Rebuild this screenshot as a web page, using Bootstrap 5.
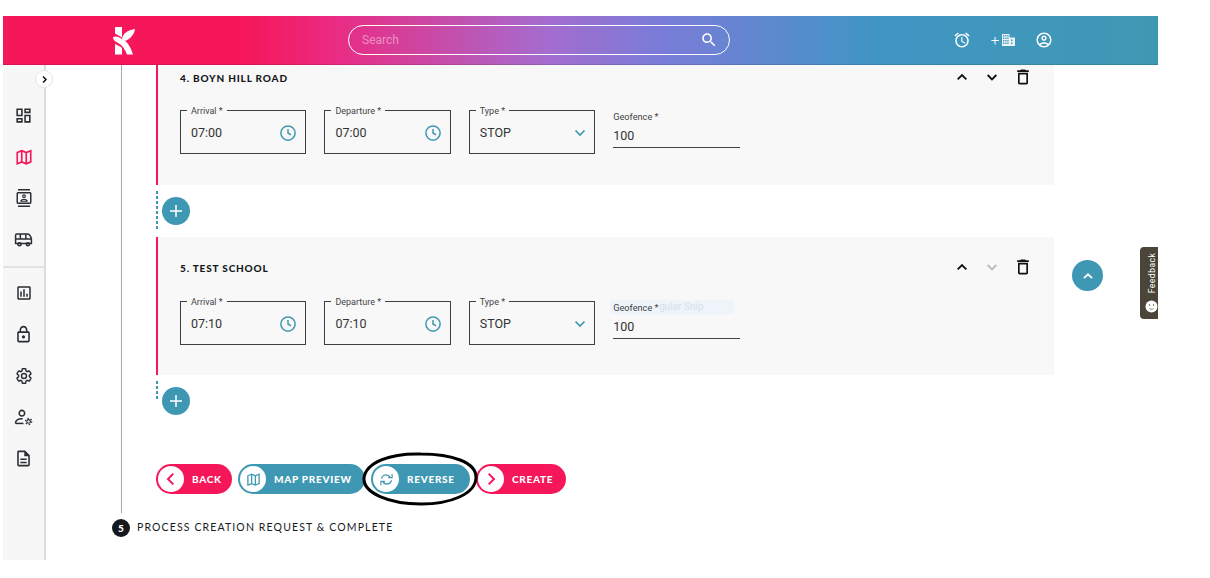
<!DOCTYPE html>
<html lang="en">
<head>
    <meta charset="UTF-8">
    <meta name="viewport" content="width=device-width, initial-scale=1.0">
    <title>Create Route</title>
    <link href="https://cdn.jsdelivr.net/npm/bootstrap@5.3.0/dist/css/bootstrap.min.css" rel="stylesheet">
    <style>
        html, body { height: 100%; overflow: hidden; }
        body { background: #fff; font-family: Roboto, "Liberation Sans", sans-serif; color: #222; }
        .app-shell { position: relative; width: 1155px; margin: 16px 0 0 3px; }
        .top-bar { height: 49px; background: linear-gradient(90deg, #f5175a 0%, #f5175a 21%, #e92c84 29%, #a56cce 47%, #7a7cd8 57%, #3f96c4 76%, #3f98b3 100%); border-bottom: 1px solid rgba(0,0,0,.12); }
        .logo-slot { width: 345px; padding-left: 110px; }
        .search-pill { width: 382px; height: 30px; border: 1.5px solid #fff; border-radius: 15px; padding: 0 11px 0 13px; }
        .search-pill span { font-size: 12px; color: rgba(255,255,255,.45); }
        .top-actions { margin-left: 223px; width: 100px; height: 100%; }
        .top-actions svg { fill: #fff; }
        .plus-mark { color: #fff; font-size: 15px; font-weight: 300; line-height: 1; margin-right: 3px; }
        .main-area { height: 495px; overflow: hidden; }
        .side-rail { width: 43px; background: #f7f7f7; border-right: 2px solid #ddd; padding-top: 30px; flex-shrink: 0; }
        .rail-item { height: 41.33px; }
        .rail-item svg { fill: #2b2f33; }
        .rail-item .line-icon { fill: none; stroke: #2b2f33; stroke-width: 1.9; }
        .rail-item .pink-icon { fill: none; stroke: #f5175a; stroke-width: 2.2; }
        .rail-sep { border-top: 2px solid #e3e3e3; margin: 5.5px 0 5px; }
        .rail-toggle { position: absolute; left: 32px; top: 54px; width: 18px; height: 18px; background: #fff; border: 1px solid #e6e6e6; border-radius: 50%; }
        .content-col { padding-left: 75px; width: 1000px; }
        .step-line { border-left: 1px solid #a8a8a8; height: 448px; padding-left: 34px; }
        .stop-box { width: 898px; background: #f8f8f8; border-left: 2px solid #f5175a; padding: 0 0 30px 22px; position: relative; }
        .stop-first { height: 120px; padding-top: 5px; }
        .stop-second { height: 138px; padding-top: 23px; }
        .stop-title { font-family: Lato, "Liberation Sans", sans-serif; font-weight: 900; font-size: 10px; letter-spacing: .83px; color: #15191d; line-height: 16px; height: 16px; }
        .stop-tools { position: absolute; right: 21px; width: 79px; }
        .stop-first .stop-tools { top: 2px; }
        .stop-second .stop-tools { top: 20px; }
        .fields-row { gap: 18px; }
        .stop-first .fields-row { margin-top: 24px; }
        .stop-second .fields-row { margin-top: 25px; }
        .out-field { position: relative; width: 126.4px; height: 44px; border: 1px solid #3c4043; padding: 2px 8px 0 10px; font-size: 12.5px; color: #333; }
        .out-field label { position: absolute; top: -6px; left: 6px; padding: 0 4px; background: #f8f8f8; font-size: 9px; line-height: 12px; color: #444; margin: 0; }
        .line-field { position: relative; width: 127px; height: 38px; border-bottom: 1px solid #444; }
        .line-field label { position: absolute; top: 1px; left: 0; font-size: 9.2px; line-height: 12px; color: #444; margin: 0; }
        .line-field span { position: absolute; top: 18px; left: 0; font-size: 12.5px; line-height: 15px; color: #333; }
        .ghost-tip { position: absolute; left: -3px; top: -1px; width: 124px; height: 14px; background: #eef4f9; color: #d6e2ea; font-size: 10px; line-height: 14px; padding-left: 49px; }
        .add-row { height: 52px; width: 898px; }
        .add-dash { width: 2px; height: 40px; margin-top: 6px; align-self: flex-start; background: repeating-linear-gradient(180deg, #3f98b3 0 3px, transparent 3px 5px); }
        .add-short .add-dash { height: 20px; }
        .add-btn { width: 28px; height: 28px; background: #3f98b3; border: 0; border-radius: 50%; padding: 0; margin-left: 4px; flex-shrink: 0; }
        .action-row { margin-top: 37px; gap: 6px; }
        .pill-btn { height: 30px; border: 0; border-radius: 15px; padding: 2px 0 2px 2px; color: #fff; font-family: Lato, "Liberation Sans", sans-serif; font-weight: 900; font-size: 10px; letter-spacing: .72px; line-height: 1; }
        .pill-btn:hover, .pill-btn:active { color: #fff; }
        .pill-pink { background: #f5175a; }
        .pill-teal { background: #3f98b3; }
        .pill-back { width: 76px; }
        .pill-map { width: 127px; }
        .pill-rev { width: 99px; }
        .pill-new { width: 90px; }
        .pill-face { width: 26px; height: 26px; border-radius: 50%; background: #fff; flex-shrink: 0; }
        .step-five { margin-left: -9px; margin-top: 6px; }
        .step-dot { width: 18px; height: 18px; border-radius: 50%; background: #15191d; color: #fff; font-family: Lato, "Liberation Sans", sans-serif; font-weight: 900; font-size: 10px; }
        .step-name { font-family: Lato, "Liberation Sans", sans-serif; font-size: 10.5px; letter-spacing: 1.13px; color: #15191d; margin-left: 7px; }
        .scroll-up { position: absolute; left: 1069px; top: 244px; width: 31px; height: 31px; background: #3f98b3; border: 0; border-radius: 50%; padding: 0; }
        .feedback-tab { position: absolute; left: 1137px; top: 231px; width: 18px; height: 72px; background: #4a4538; border-radius: 4px 0 0 4px; overflow: hidden; }
        .feedback-tab span { position: absolute; left: 12px; top: 26px; transform: translate(-50%, -50%) rotate(-90deg); color: #fff; font-size: 8.5px; letter-spacing: .5px; white-space: nowrap; }
        .feedback-tab svg { position: absolute; left: 5px; top: 53px; }
        .ink-ring { position: absolute; left: 358px; top: 434px; pointer-events: none; }
    </style>
</head>
<body>
    <div class="app-shell">
        <!-- top bar -->
        <header class="top-bar d-flex align-items-center">
            <div class="logo-slot">
                <svg width="23" height="29" viewBox="0 0 23 29" fill="#fff">
                    <path d="M2 1h7v10.500L2 7.500z"/>
                    <path d="M0 11c3-1.500 6 0 9 2 3 2 7 3 11 15.500h-6C12 23 9 19 5 17c-3-1.500-5-3-5-6z"/>
                    <path d="M2 18c2 1 5 2 7 4v6.500H2z"/>
                    <path d="M9 13c1-6 6-9 13-10-1 6-5 10-10 12z"/>
                </svg>
            </div>
            <div class="search-pill d-flex align-items-center justify-content-between">
                <span>Search</span>
                <svg width="18" height="18" viewBox="0 0 24 24" fill="#fff"><path d="M15.500 14h-.79l-.28-.27C15.410 12.590 16 11.110 16 9.500 16 5.910 13.090 3 9.500 3S3 5.910 3 9.500 5.910 16 9.500 16c1.610 0 3.090-.59 4.230-1.570l.27.28v.79l5 4.990L20.490 19l-4.990-5zm-6 0C7.010 14 5 11.990 5 9.500S7.010 5 9.500 5 14 7.010 14 9.500 11.990 14 9.500 14z"/></svg>
            </div>
            <div class="top-actions d-flex align-items-center justify-content-between">
                <svg width="18" height="18" viewBox="0 0 24 24"><path d="M22 5.720l-4.600-3.860-1.290 1.530 4.600 3.860L22 5.720zM7.880 3.390L6.600 1.860 2 5.710l1.290 1.530 4.590-3.850zM12.500 8H11v6l4.750 2.850.75-1.230-4-2.370V8zM12 4c-4.970 0-9 4.030-9 9s4.020 9 9 9c4.970 0 9-4.030 9-9s-4.030-9-9-9zm0 16c-3.870 0-7-3.130-7-7s3.130-7 7-7 7 3.130 7 7-3.130 7-7 7z"/></svg>
                <div class="d-flex align-items-center">
                    <span class="plus-mark">+</span>
                    <svg width="13" height="12" viewBox="0 0 13 12" opacity=".9"><path fill-rule="evenodd" d="M0 0h7.500v3.500H13V12H0zM1 1v1.500h1.300V1zM3.200 1v1.500h1.300V1zM5.300 1v1.500h1.300V1zM1 3.500V5h1.300V3.500zM3.200 3.500V5h1.300V3.500zM5.300 3.500V5h1.300V3.500zM1 6v1.500h1.300V6zM3.200 6v1.500h1.300V6zM5.300 6v1.500h1.300V6zM1 8.500V10h1.300V8.500zM3.200 8.500V10h1.300V8.500zM5.300 8.500V10h1.300V8.500zM9 5.500V7h1.500V5.500zM9 8.500V10h1.500V8.500z"/></svg>
                </div>
                <svg width="18" height="18" viewBox="0 0 24 24"><path d="M12 2C6.480 2 2 6.480 2 12s4.480 10 10 10 10-4.480 10-10S17.520 2 12 2zM7.350 18.500C8.660 17.560 10.260 17 12 17s3.340.56 4.650 1.500c-1.310.94-2.910 1.500-4.650 1.500s-3.340-.56-4.650-1.500zm10.790-1.380C16.450 15.800 14.320 15 12 15s-4.450.8-6.140 2.120C4.700 15.730 4 13.950 4 12c0-4.420 3.580-8 8-8s8 3.580 8 8c0 1.950-.7 3.730-1.860 5.120zM12 6c-1.930 0-3.500 1.570-3.500 3.500S10.070 13 12 13s3.500-1.570 3.500-3.500S13.930 6 12 6zm0 5c-.83 0-1.500-.67-1.500-1.500S11.170 8 12 8s1.500.67 1.500 1.500S12.830 11 12 11z"/></svg>
            </div>
        </header>

        <div class="main-area d-flex">
            <!-- side rail -->
            <nav class="side-rail">
                <div class="rail-item d-flex align-items-center justify-content-center">
                    <svg width="19" height="19" viewBox="0 0 24 24"><path d="M19 5v2h-4V5h4M9 5v6H5V5h4m10 8v6h-4v-6h4M9 17v2H5v-2h4M21 3h-8v6h8V3zM11 3H3v10h8V3zm10 8h-8v10h8V11zm-10 4H3v6h8v-6z"/></svg>
                </div>
                <div class="rail-item d-flex align-items-center justify-content-center">
                    <svg width="18" height="18" viewBox="0 0 24 24" class="pink-icon"><path d="M3 6l6-2.500 6 2.500 6-2.500v15L15 21l-6-2.500L3 21zM9 3.500v15M15 6v15"/></svg>
                </div>
                <div class="rail-item d-flex align-items-center justify-content-center">
                    <svg width="18" height="18" viewBox="0 0 24 24"><path d="M20 0H4v2h16V0zM4 24h16v-2H4v2zM20 4H4c-1.100 0-2 .9-2 2v12c0 1.100.9 2 2 2h16c1.100 0 2-.9 2-2V6c0-1.100-.9-2-2-2zm0 14H4V6h16v12zm-8-6c1.380 0 2.500-1.120 2.500-2.500S13.380 7 12 7 9.500 8.120 9.500 9.500 10.620 12 12 12zm0-3.500c.55 0 1 .45 1 1s-.45 1-1 1-1-.45-1-1 .45-1 1-1zM17 15.990c0-2.090-3.310-2.990-5-2.990s-5 .9-5 2.990V17h10v-1.010zM8.810 15.500c.61-.52 2.030-1 3.190-1 1.170 0 2.590.48 3.200 1H8.810z"/></svg>
                </div>
                <div class="rail-item d-flex align-items-center justify-content-center">
                    <svg width="19" height="19" viewBox="0 0 24 24" class="line-icon"><path d="M2 7c0-1 .6-2 1.500-2h14c2 0 4.500 4 4.500 7v5H2zM2 11.500h19.500M8 5v6.500M15 5v6.500"/><circle cx="7" cy="18" r="2"/><circle cx="17.500" cy="18" r="2"/></svg>
                </div>
                <div class="rail-sep"></div>
                <div class="rail-item d-flex align-items-center justify-content-center">
                    <svg width="18" height="18" viewBox="0 0 24 24"><path d="M19 3H5c-1.100 0-2 .9-2 2v14c0 1.100.9 2 2 2h14c1.100 0 2-.9 2-2V5c0-1.100-.9-2-2-2zm0 16H5V5h14v14zM7 10h2v7H7zm4-3h2v10h-2zm4 6h2v4h-2z"/></svg>
                </div>
                <div class="rail-item d-flex align-items-center justify-content-center">
                    <svg width="19" height="19" viewBox="0 0 24 24"><path d="M18 8h-1V6c0-2.760-2.240-5-5-5S7 3.240 7 6v2H6c-1.100 0-2 .9-2 2v10c0 1.100.9 2 2 2h12c1.100 0 2-.9 2-2V10c0-1.100-.9-2-2-2zM9 6c0-1.660 1.340-3 3-3s3 1.340 3 3v2H9V6zm9 14H6V10h12v10zm-6-3c1.100 0 2-.9 2-2s-.9-2-2-2-2 .9-2 2 .9 2 2 2z"/></svg>
                </div>
                <div class="rail-item d-flex align-items-center justify-content-center">
                    <svg width="18" height="18" viewBox="0 0 24 24" class="line-icon"><path d="M19.140 12.940c.04-.3.06-.61.06-.94 0-.32-.02-.64-.07-.94l2.030-1.580c.18-.14.23-.41.12-.61l-1.920-3.320c-.12-.22-.37-.29-.59-.22l-2.390.96c-.5-.38-1.030-.7-1.620-.94l-.36-2.540c-.04-.24-.24-.41-.48-.41h-3.840c-.24 0-.43.17-.47.41l-.36 2.540c-.59.24-1.130.57-1.620.94l-2.390-.96c-.22-.08-.47 0-.59.22L2.740 8.870c-.12.21-.08.47.12.61l2.030 1.580c-.05.3-.09.63-.09.94s.02.64.07.94l-2.030 1.580c-.18.14-.23.41-.12.61l1.920 3.320c.12.22.37.29.59.22l2.390-.96c.5.38 1.030.7 1.620.94l.36 2.540c.05.24.24.41.48.41h3.840c.24 0 .44-.17.47-.41l.36-2.540c.59-.24 1.130-.56 1.620-.94l2.390.96c.22.08.47 0 .59-.22l1.920-3.320c.12-.22.07-.47-.12-.61l-2.010-1.580z"/><circle cx="12" cy="12" r="3.300"/></svg>
                </div>
                <div class="rail-item d-flex align-items-center justify-content-center">
                    <svg width="19" height="19" viewBox="0 0 24 24" class="line-icon"><circle cx="10" cy="6.500" r="3.500"/><path d="M2 19.500v-1c0-3 3.500-5 7-5h2"/><path d="M2 19.500h10"/><circle cx="18.500" cy="17" r="2.300" stroke-width="1.500"/><circle cx="18.500" cy="17" r="3.900" stroke-dasharray="1.800 2.300" stroke-width="1.600"/></svg>
                </div>
                <div class="rail-item d-flex align-items-center justify-content-center">
                    <svg width="19" height="19" viewBox="0 0 24 24"><path d="M8 16h8v2H8zm0-4h8v2H8zm6-10H6c-1.100 0-2 .9-2 2v16c0 1.100.89 2 1.990 2H18c1.100 0 2-.9 2-2V8l-6-6zm4 18H6V4h7v5h5v11z"/></svg>
                </div>
            </nav>

            <!-- stepper content -->
            <main class="content-col">
                <div class="step-line">
                    <section class="stop-box stop-first">
                        <div class="stop-title">4. BOYN HILL ROAD</div>
                        <div class="stop-tools d-flex align-items-center justify-content-between">
                            <svg width="16" height="16" viewBox="0 0 24 24" fill="none" stroke="#111" stroke-width="2.800"><path d="M5.500 15.500 12 9l6.500 6.500"/></svg>
                            <svg width="16" height="16" viewBox="0 0 24 24" fill="none" stroke="#111" stroke-width="2.800"><path d="M5.500 9 12 15.500 18.500 9"/></svg>
                            <svg width="20" height="20" viewBox="0 0 24 24" fill="#111"><path d="M16 9v10H8V9h8m-1.500-6h-5l-1 1H5v2h14V4h-3.500l-1-1zM18 7H6v12c0 1.100.9 2 2 2h8c1.100 0 2-.9 2-2V7z"/></svg>
                        </div>
                        <div class="fields-row d-flex align-items-start">
                            <div class="out-field d-flex align-items-center justify-content-between">
                                <label>Arrival *</label><span>07:00</span>
                                <svg width="18" height="18" viewBox="0 0 24 24" fill="none" stroke="#3f98b3" stroke-width="2"><circle cx="12" cy="12" r="9.500"/><path d="M12 6.500V12l4 2.500"/></svg>
                            </div>
                            <div class="out-field d-flex align-items-center justify-content-between">
                                <label>Departure *</label><span>07:00</span>
                                <svg width="18" height="18" viewBox="0 0 24 24" fill="none" stroke="#3f98b3" stroke-width="2"><circle cx="12" cy="12" r="9.500"/><path d="M12 6.500V12l4 2.500"/></svg>
                            </div>
                            <div class="out-field d-flex align-items-center justify-content-between">
                                <label>Type *</label><span>STOP</span>
                                <svg width="12" height="12" viewBox="0 0 24 24" fill="none" stroke="#3f98b3" stroke-width="3.500"><path d="M3 7l9 9 9-9"/></svg>
                            </div>
                            <div class="line-field">
                                <label>Geofence *</label><span>100</span>
                            </div>
                        </div>
                    </section>

                    <div class="add-row d-flex align-items-center">
                        <div class="add-dash"></div>
                        <button class="add-btn d-flex align-items-center justify-content-center" type="button">
                            <svg width="14" height="14" viewBox="0 0 14 14" stroke="#fff" stroke-width="1.500"><path d="M7 1v12M1 7h12"/></svg>
                        </button>
                    </div>

                    <section class="stop-box stop-second">
                        <div class="stop-title">5. TEST SCHOOL</div>
                        <div class="stop-tools d-flex align-items-center justify-content-between">
                            <svg width="16" height="16" viewBox="0 0 24 24" fill="none" stroke="#111" stroke-width="2.800"><path d="M5.500 15.500 12 9l6.500 6.500"/></svg>
                            <svg width="16" height="16" viewBox="0 0 24 24" fill="none" stroke="#bbb" stroke-width="2.800"><path d="M5.500 9 12 15.500 18.500 9"/></svg>
                            <svg width="20" height="20" viewBox="0 0 24 24" fill="#111"><path d="M16 9v10H8V9h8m-1.500-6h-5l-1 1H5v2h14V4h-3.500l-1-1zM18 7H6v12c0 1.100.9 2 2 2h8c1.100 0 2-.9 2-2V7z"/></svg>
                        </div>
                        <div class="fields-row d-flex align-items-start">
                            <div class="out-field d-flex align-items-center justify-content-between">
                                <label>Arrival *</label><span>07:10</span>
                                <svg width="18" height="18" viewBox="0 0 24 24" fill="none" stroke="#3f98b3" stroke-width="2"><circle cx="12" cy="12" r="9.500"/><path d="M12 6.500V12l4 2.500"/></svg>
                            </div>
                            <div class="out-field d-flex align-items-center justify-content-between">
                                <label>Departure *</label><span>07:10</span>
                                <svg width="18" height="18" viewBox="0 0 24 24" fill="none" stroke="#3f98b3" stroke-width="2"><circle cx="12" cy="12" r="9.500"/><path d="M12 6.500V12l4 2.500"/></svg>
                            </div>
                            <div class="out-field d-flex align-items-center justify-content-between">
                                <label>Type *</label><span>STOP</span>
                                <svg width="12" height="12" viewBox="0 0 24 24" fill="none" stroke="#3f98b3" stroke-width="3.500"><path d="M3 7l9 9 9-9"/></svg>
                            </div>
                            <div class="line-field">
                                <div class="ghost-tip">gular Snip</div>
                                <label>Geofence *</label><span>100</span>
                            </div>
                        </div>
                    </section>

                    <div class="add-row add-short d-flex align-items-center">
                        <div class="add-dash"></div>
                        <button class="add-btn d-flex align-items-center justify-content-center" type="button">
                            <svg width="14" height="14" viewBox="0 0 14 14" stroke="#fff" stroke-width="1.500"><path d="M7 1v12M1 7h12"/></svg>
                        </button>
                    </div>

                    <div class="action-row d-flex">
                        <button class="btn pill-btn pill-pink pill-back d-flex align-items-center" type="button">
                            <span class="pill-face d-flex align-items-center justify-content-center"><svg width="16" height="16" viewBox="0 0 24 24" fill="none" stroke="#f5175a" stroke-width="3"><path d="M15.500 4 7.500 12l8 8"/></svg></span>
                            <span class="ms-2">BACK</span>
                        </button>
                        <button class="btn pill-btn pill-teal pill-map d-flex align-items-center" type="button">
                            <span class="pill-face d-flex align-items-center justify-content-center"><svg width="15" height="15" viewBox="0 0 24 24" fill="none" stroke="#3f98b3" stroke-width="2"><path d="M3 6l6-2.500 6 2.500 6-2.500v15L15 21l-6-2.500L3 21zM9 3.500v15M15 6v15"/></svg></span>
                            <span class="ms-2">MAP PREVIEW</span>
                        </button>
                        <button class="btn pill-btn pill-teal pill-rev d-flex align-items-center" type="button">
                            <span class="pill-face d-flex align-items-center justify-content-center"><svg width="15" height="15" viewBox="0 0 24 24" fill="none" stroke="#3f98b3" stroke-width="2.200"><path d="M4 10.500C5 6.500 9 4 13 5c2 .4 3.500 1.500 4.500 3M20 13.500c-1 4-5 6.500-9 5.500-2-.4-3.500-1.500-4.500-3"/><path d="M14.500 9H21V3M9.500 15H3v6" stroke-width="1.800"/></svg></span>
                            <span class="ms-2">REVERSE</span>
                        </button>
                        <button class="btn pill-btn pill-pink pill-new d-flex align-items-center" type="button">
                            <span class="pill-face d-flex align-items-center justify-content-center"><svg width="16" height="16" viewBox="0 0 24 24" fill="none" stroke="#f5175a" stroke-width="3"><path d="M8.500 4 16.500 12l-8 8"/></svg></span>
                            <span class="ms-2">CREATE</span>
                        </button>
                    </div>
                </div>

                <div class="step-five d-flex align-items-center">
                    <span class="step-dot d-flex align-items-center justify-content-center">5</span>
                    <span class="step-name">PROCESS CREATION REQUEST &amp; COMPLETE</span>
                </div>
            </main>
        </div>

        <!-- things sitting over the page -->
        <div class="rail-toggle d-flex align-items-center justify-content-center">
            <svg width="9" height="9" viewBox="0 0 24 24" fill="none" stroke="#111" stroke-width="4"><path d="M8 4l8 8-8 8"/></svg>
        </div>
        <button class="scroll-up d-flex align-items-center justify-content-center" type="button">
            <svg width="14" height="14" viewBox="0 0 24 24" fill="none" stroke="#fff" stroke-width="3"><path d="M5 15.500 12 9l7 6.500"/></svg>
        </button>
        <div class="feedback-tab">
            <span>Feedback</span>
            <svg width="13" height="13" viewBox="0 0 13 13"><circle cx="6.500" cy="6.500" r="6" fill="#fff"/><circle cx="4.500" cy="5" r=".7" fill="#4a4538"/><circle cx="8.500" cy="5" r=".7" fill="#4a4538"/><path d="M4.500 8.500c1 1 3 1 4 0" fill="none" stroke="#4a4538" stroke-width=".7"/></svg>
        </div>
        <svg class="ink-ring" width="120" height="58" viewBox="0 0 120 58" fill="none" stroke="#000" stroke-width="3">
            <path d="M60 4C30 3 5 12 3 28c-1 15 25 26 57 26 30 0 54-10 55-26C116 12 90 4 60 4z"/>
        </svg>
    </div>
    <script src="https://cdn.jsdelivr.net/npm/bootstrap@5.3.0/dist/js/bootstrap.bundle.min.js"></script>
</body>
</html>
